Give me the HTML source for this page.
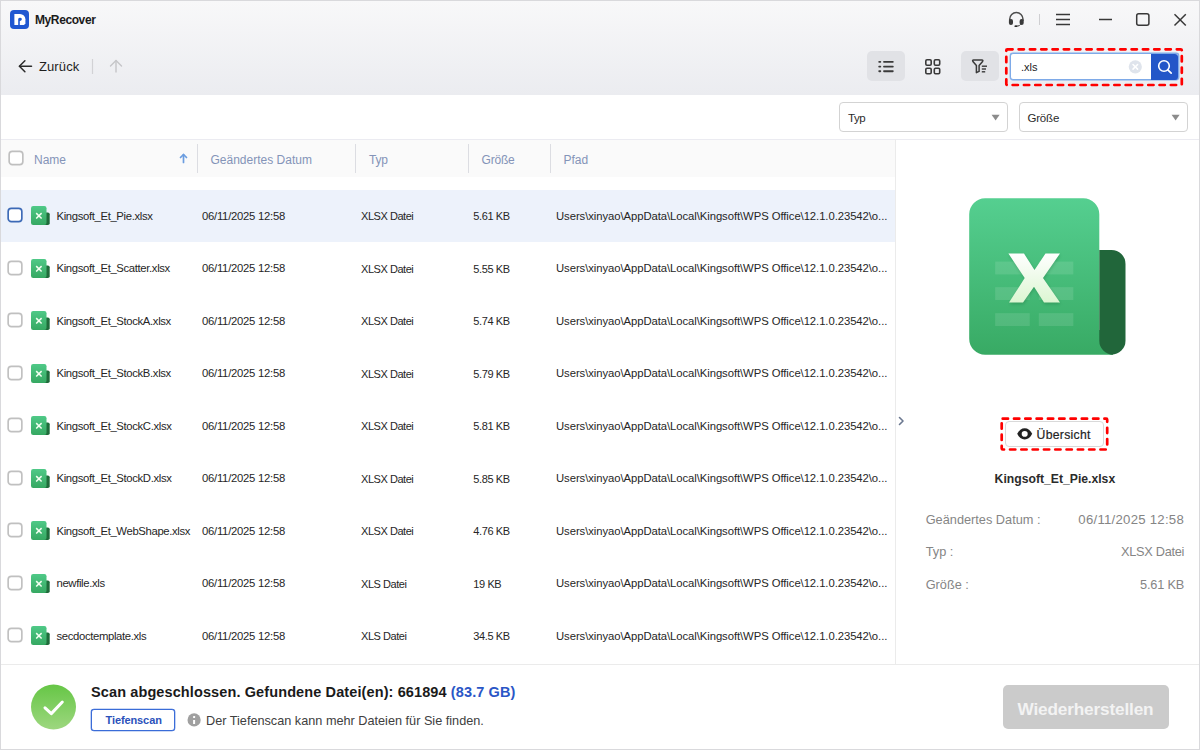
<!DOCTYPE html>
<html><head><meta charset="utf-8">
<style>
*{margin:0;padding:0;box-sizing:border-box}
html,body{width:1200px;height:750px;overflow:hidden;background:#fff}
body{position:relative;font-family:"Liberation Sans",sans-serif;color:#333}
.a{position:absolute}
.t{position:absolute;white-space:nowrap;line-height:1}
#frame{position:absolute;left:0;top:0;width:1200px;height:750px;border:1px solid #d9d9dc;z-index:50}
</style></head><body>
<div class="a" style="left:1px;top:1px;width:1198px;height:94px;background:linear-gradient(#f8f8f9,#ebecf0)"></div>
<svg class="a" style="left:10px;top:10px" width="19" height="19" viewBox="0 0 19 19">
<rect x="0" y="0" width="19" height="19" rx="4" fill="#1f57d1"/>
<path d="M4.4 3.9 H10 A5.4 5.4 0 0 1 15.4 9.3 V13.6 L14 15 H4.4 Z" fill="#fff"/>
<path d="M8.2 15 V9.1 A1.9 1.9 0 0 1 11.9 9.1 A1.9 1.9 0 0 1 9.8 10.9 V15 Z" fill="#1f57d1"/>
</svg>
<div class="t" style="left:35px;top:13.84px;font-size:12px;font-weight:bold;color:#1b1b1b;letter-spacing:-0.4px;">MyRecover</div>
<svg class="a" style="left:1000px;top:5px" width="200" height="30" viewBox="1000 5 200 30">
<g fill="none" stroke="#383838" stroke-width="1.5" stroke-linecap="butt">
<path d="M1009.7 21 V19.2 A6.65 6.65 0 0 1 1023 19.2 V21" stroke-width="1.5" stroke="#4e4e4e"/>
<line x1="1056" y1="14.5" x2="1070" y2="14.5"/>
<line x1="1056" y1="19.5" x2="1070" y2="19.5"/>
<line x1="1056" y1="24.5" x2="1070" y2="24.5"/>
<line x1="1099" y1="19.5" x2="1112" y2="19.5"/>
<rect x="1136.7" y="13.7" width="12.2" height="11.6" rx="2"/>
<line x1="1174.5" y1="14.2" x2="1185.8" y2="25.5"/>
<line x1="1185.8" y1="14.2" x2="1174.5" y2="25.5"/>
</g>
<rect x="1008.9" y="18.9" width="4.1" height="6" rx="2" fill="#3a3a3a"/>
<rect x="1019.6" y="18.9" width="4.1" height="6" rx="2" fill="#3a3a3a"/>
<path d="M1020.6 24.3 Q1019.8 26.2 1016.5 26.2" fill="none" stroke="#3a3a3a" stroke-width="1"/>
<ellipse cx="1015.9" cy="26.15" rx="1.5" ry="0.85" fill="#2a2a2a"/>
<line x1="1039.5" y1="14" x2="1039.5" y2="25" stroke="#cfcfd2" stroke-width="1"/>
</svg>
<svg class="a" style="left:10px;top:50px" width="120" height="30" viewBox="10 50 120 30">
<g fill="none" stroke="#2a2a2a" stroke-width="1.5" stroke-linecap="round" stroke-linejoin="round">
<line x1="19.5" y1="66.3" x2="31.5" y2="66.3"/>
<polyline points="24.9,60.8 19.4,66.3 24.9,71.8"/>
</g>
<line x1="92.5" y1="59" x2="92.5" y2="74" stroke="#d2d2d5" stroke-width="1.2"/>
<g fill="none" stroke="#c5c5c8" stroke-width="1.4" stroke-linecap="round" stroke-linejoin="round">
<line x1="116" y1="60.5" x2="116" y2="72"/>
<polyline points="110.5,66 116,60.5 121.5,66"/>
</g>
</svg>
<div class="t" style="left:39px;top:60.00px;font-size:13px;font-weight:normal;color:#1f1f1f;letter-spacing:0.1px;">Zurück</div>
<div class="a" style="left:867px;top:51px;width:37.5px;height:30px;background:#e1e2e6;border-radius:5px"></div>
<div class="a" style="left:961px;top:51px;width:37.5px;height:30px;background:#e1e2e6;border-radius:5px"></div>
<svg class="a" style="left:860px;top:45px" width="140" height="40" viewBox="860 45 140 40">
<g fill="#3a3a3a">
<rect x="878.3" y="60.95" width="2.9" height="1.9" rx="0.8"/>
<rect x="878.3" y="65.7" width="2.9" height="1.9" rx="0.8"/>
<rect x="878.3" y="70.25" width="2.9" height="1.9" rx="0.8"/>
<rect x="883.1" y="60.95" width="10.6" height="1.9" rx="0.8"/>
<rect x="883.1" y="65.7" width="10.6" height="1.9" rx="0.8"/>
<rect x="883.1" y="70.25" width="10.6" height="1.9" rx="0.8"/>
</g>
<g fill="none" stroke="#3a3a3a" stroke-width="1.6">
<rect x="925.8" y="59.8" width="5.4" height="5.4" rx="1.2"/>
<rect x="934.3" y="59.8" width="5.4" height="5.4" rx="1.2"/>
<rect x="925.8" y="68.3" width="5.4" height="5.4" rx="1.2"/>
<rect x="934.3" y="68.3" width="5.4" height="5.4" rx="1.2"/>
<path d="M973.6 60.1 H981.9 Q983.4 60.1 982.6 61.5 L979.1 65.6 V71.4 L976.4 72.6 V65.6 L972.9 61.5 Q972.1 60.1 973.6 60.1 Z" stroke-linejoin="round" stroke-width="1.5"/>
</g>
<g fill="#3a3a3a">
<rect x="981.8" y="65.5" width="5.2" height="1.4"/>
<rect x="981.8" y="68.3" width="4.2" height="1.4"/>
<rect x="981.8" y="71.1" width="3.4" height="1.4"/>
</g>
</svg>
<div class="a" style="left:1010px;top:53px;width:168.5px;height:27px;background:#fff;border:1px solid #7eaae8;box-shadow:0 0 0 0.4px #7eaae8;border-radius:3px"></div>
<div class="a" style="left:1151px;top:53.5px;width:26.8px;height:26.3px;background:#2356c8;border-radius:0 3px 3px 0"></div>
<svg class="a" style="left:1120px;top:50px" width="70" height="34" viewBox="1120 50 70 34">
<circle cx="1135.3" cy="66.8" r="6.6" fill="#dfe4ec"/>
<g stroke="#fff" stroke-width="1.5" stroke-linecap="round">
<line x1="1133" y1="64.5" x2="1137.6" y2="69.1"/><line x1="1137.6" y1="64.5" x2="1133" y2="69.1"/>
</g>
<circle cx="1164" cy="66" r="5.3" fill="none" stroke="#fff" stroke-width="1.6"/>
<line x1="1167.8" y1="69.8" x2="1171.2" y2="73.2" stroke="#fff" stroke-width="1.7" stroke-linecap="round"/>
</svg>
<div class="t" style="left:1021px;top:61.69px;font-size:11px;font-weight:normal;color:#222;letter-spacing:0px;">.xls</div>
<svg class="a" style="left:1003px;top:45px" width="183" height="44" viewBox="1003 45 183 44">
<rect x="1006.3" y="49.3" width="175.5" height="35.7" rx="1" fill="none" stroke="#ff0000" stroke-width="2.7" stroke-dasharray="5.3 6" stroke-linecap="round"/>
</svg>
<div class="a" style="left:839px;top:102px;width:168.5px;height:29.8px;background:#fff;border:1px solid #d3d3d3;border-radius:4px"></div>
<div class="a" style="left:1019px;top:102px;width:168.5px;height:29.8px;background:#fff;border:1px solid #d3d3d3;border-radius:4px"></div>
<div class="t" style="left:848px;top:112.87px;font-size:11.5px;font-weight:normal;color:#2a2a2a;letter-spacing:-0.4px;">Typ</div>
<div class="t" style="left:1027.5px;top:112.57px;font-size:11.5px;font-weight:normal;color:#2a2a2a;letter-spacing:-0.2px;">Größe</div>
<svg class="a" style="left:980px;top:105px" width="210" height="24" viewBox="980 105 210 24">
<path d="M991.6 114.8 H999.6 L995.6 120.6 Z" fill="#8c8c8c"/>
<path d="M1171.6 114.8 H1179.6 L1175.6 120.6 Z" fill="#8c8c8c"/>
</svg>
<div class="a" style="left:1px;top:139px;width:1198px;height:1px;background:#ebebf1"></div>
<div class="a" style="left:1px;top:140px;width:894px;height:37px;background:#fafafa"></div>
<svg class="a" style="left:5.949999999999999px;top:148.25px" width="20" height="20" viewBox="0 0 20 20"><rect x="3.15" y="3.4" width="13.7" height="13.2" rx="3.2" fill="#fff" stroke="#bfbfbf" stroke-width="1.65"/></svg>
<div class="t" style="left:34px;top:153.84px;font-size:12px;font-weight:normal;color:#8494b8;letter-spacing:0px;">Name</div>
<svg class="a" style="left:175px;top:150px" width="16" height="16" viewBox="175 150 16 16">
<g fill="none" stroke="#6b9de0" stroke-width="1.7" stroke-linecap="round" stroke-linejoin="round">
<line x1="183.5" y1="154.5" x2="183.5" y2="162.5"/><polyline points="180.5,157.5 183.5,154.5 186.5,157.5"/>
</g></svg>
<div class="a" style="left:197.0px;top:144px;width:1px;height:29px;background:#dcdde2"></div>
<div class="a" style="left:355.0px;top:144px;width:1px;height:29px;background:#dcdde2"></div>
<div class="a" style="left:468.0px;top:144px;width:1px;height:29px;background:#dcdde2"></div>
<div class="a" style="left:550.0px;top:144px;width:1px;height:29px;background:#dcdde2"></div>
<div class="t" style="left:210.5px;top:153.84px;font-size:12px;font-weight:normal;color:#8494b8;letter-spacing:0px;">Geändertes Datum</div>
<div class="t" style="left:369px;top:153.84px;font-size:12px;font-weight:normal;color:#8494b8;letter-spacing:-0.2px;">Typ</div>
<div class="t" style="left:481.5px;top:153.84px;font-size:12px;font-weight:normal;color:#8494b8;letter-spacing:-0.2px;">Größe</div>
<div class="t" style="left:563.5px;top:153.84px;font-size:12px;font-weight:normal;color:#8494b8;letter-spacing:0px;">Pfad</div>
<div class="a" style="left:1px;top:189.5px;width:894px;height:52px;background:#edf2fb"></div>
<svg class="a" style="left:4.949999999999999px;top:205.2px" width="20" height="20" viewBox="0 0 20 20"><rect x="3.15" y="3.4" width="13.7" height="13.2" rx="3.2" fill="#fff" stroke="#3c69b6" stroke-width="1.65"/></svg>
<svg class="a" style="left:31px;top:206.0px" width="20" height="20" viewBox="0 0 20 20">
<defs><linearGradient id="gi0" x1="0" y1="0" x2="0" y2="1"><stop offset="0" stop-color="#4fc987"/><stop offset="1" stop-color="#36a862"/></linearGradient></defs>
<rect x="10" y="6.5" width="8.7" height="12.5" rx="1.8" fill="#1f6b3a"/>
<rect x="0" y="0" width="15.5" height="19" rx="2.2" fill="url(#gi0)"/>
<path d="M5.2 7.1 L10.6 12.5 M10.6 7.1 L5.2 12.5" stroke="#f4fff2" stroke-width="1.5"/>
</svg>
<div class="t" style="left:56.5px;top:210.83px;font-size:11.3px;font-weight:normal;color:#262626;letter-spacing:-0.35px;">Kingsoft_Et_Pie.xlsx</div>
<div class="t" style="left:202px;top:210.83px;font-size:11.3px;font-weight:normal;color:#262626;letter-spacing:-0.26px;">06/11/2025 12:58</div>
<div class="t" style="left:361px;top:211.09px;font-size:11px;font-weight:normal;color:#262626;letter-spacing:-0.45px;">XLSX Datei</div>
<div class="t" style="left:473.3px;top:211.09px;font-size:11px;font-weight:normal;color:#262626;letter-spacing:-0.4px;">5.61 KB</div>
<div class="t" style="left:556px;top:210.83px;font-size:11.3px;font-weight:normal;color:#262626;letter-spacing:-0.07px;">Users\xinyao\AppData\Local\Kingsoft\WPS Office\12.1.0.23542\o...</div>
<svg class="a" style="left:4.949999999999999px;top:257.7px" width="20" height="20" viewBox="0 0 20 20"><rect x="3.15" y="3.4" width="13.7" height="13.2" rx="3.2" fill="#fff" stroke="#c0c0c0" stroke-width="1.65"/></svg>
<svg class="a" style="left:31px;top:258.5px" width="20" height="20" viewBox="0 0 20 20">
<defs><linearGradient id="gi1" x1="0" y1="0" x2="0" y2="1"><stop offset="0" stop-color="#4fc987"/><stop offset="1" stop-color="#36a862"/></linearGradient></defs>
<rect x="10" y="6.5" width="8.7" height="12.5" rx="1.8" fill="#1f6b3a"/>
<rect x="0" y="0" width="15.5" height="19" rx="2.2" fill="url(#gi1)"/>
<path d="M5.2 7.1 L10.6 12.5 M10.6 7.1 L5.2 12.5" stroke="#f4fff2" stroke-width="1.5"/>
</svg>
<div class="t" style="left:56.5px;top:263.33px;font-size:11.3px;font-weight:normal;color:#262626;letter-spacing:-0.35px;">Kingsoft_Et_Scatter.xlsx</div>
<div class="t" style="left:202px;top:263.33px;font-size:11.3px;font-weight:normal;color:#262626;letter-spacing:-0.26px;">06/11/2025 12:58</div>
<div class="t" style="left:361px;top:263.59px;font-size:11px;font-weight:normal;color:#262626;letter-spacing:-0.45px;">XLSX Datei</div>
<div class="t" style="left:473.3px;top:263.59px;font-size:11px;font-weight:normal;color:#262626;letter-spacing:-0.4px;">5.55 KB</div>
<div class="t" style="left:556px;top:263.33px;font-size:11.3px;font-weight:normal;color:#262626;letter-spacing:-0.07px;">Users\xinyao\AppData\Local\Kingsoft\WPS Office\12.1.0.23542\o...</div>
<svg class="a" style="left:4.949999999999999px;top:310.2px" width="20" height="20" viewBox="0 0 20 20"><rect x="3.15" y="3.4" width="13.7" height="13.2" rx="3.2" fill="#fff" stroke="#c0c0c0" stroke-width="1.65"/></svg>
<svg class="a" style="left:31px;top:311.0px" width="20" height="20" viewBox="0 0 20 20">
<defs><linearGradient id="gi2" x1="0" y1="0" x2="0" y2="1"><stop offset="0" stop-color="#4fc987"/><stop offset="1" stop-color="#36a862"/></linearGradient></defs>
<rect x="10" y="6.5" width="8.7" height="12.5" rx="1.8" fill="#1f6b3a"/>
<rect x="0" y="0" width="15.5" height="19" rx="2.2" fill="url(#gi2)"/>
<path d="M5.2 7.1 L10.6 12.5 M10.6 7.1 L5.2 12.5" stroke="#f4fff2" stroke-width="1.5"/>
</svg>
<div class="t" style="left:56.5px;top:315.83px;font-size:11.3px;font-weight:normal;color:#262626;letter-spacing:-0.35px;">Kingsoft_Et_StockA.xlsx</div>
<div class="t" style="left:202px;top:315.83px;font-size:11.3px;font-weight:normal;color:#262626;letter-spacing:-0.26px;">06/11/2025 12:58</div>
<div class="t" style="left:361px;top:316.09px;font-size:11px;font-weight:normal;color:#262626;letter-spacing:-0.45px;">XLSX Datei</div>
<div class="t" style="left:473.3px;top:316.09px;font-size:11px;font-weight:normal;color:#262626;letter-spacing:-0.4px;">5.74 KB</div>
<div class="t" style="left:556px;top:315.83px;font-size:11.3px;font-weight:normal;color:#262626;letter-spacing:-0.07px;">Users\xinyao\AppData\Local\Kingsoft\WPS Office\12.1.0.23542\o...</div>
<svg class="a" style="left:4.949999999999999px;top:362.7px" width="20" height="20" viewBox="0 0 20 20"><rect x="3.15" y="3.4" width="13.7" height="13.2" rx="3.2" fill="#fff" stroke="#c0c0c0" stroke-width="1.65"/></svg>
<svg class="a" style="left:31px;top:363.5px" width="20" height="20" viewBox="0 0 20 20">
<defs><linearGradient id="gi3" x1="0" y1="0" x2="0" y2="1"><stop offset="0" stop-color="#4fc987"/><stop offset="1" stop-color="#36a862"/></linearGradient></defs>
<rect x="10" y="6.5" width="8.7" height="12.5" rx="1.8" fill="#1f6b3a"/>
<rect x="0" y="0" width="15.5" height="19" rx="2.2" fill="url(#gi3)"/>
<path d="M5.2 7.1 L10.6 12.5 M10.6 7.1 L5.2 12.5" stroke="#f4fff2" stroke-width="1.5"/>
</svg>
<div class="t" style="left:56.5px;top:368.33px;font-size:11.3px;font-weight:normal;color:#262626;letter-spacing:-0.35px;">Kingsoft_Et_StockB.xlsx</div>
<div class="t" style="left:202px;top:368.33px;font-size:11.3px;font-weight:normal;color:#262626;letter-spacing:-0.26px;">06/11/2025 12:58</div>
<div class="t" style="left:361px;top:368.59px;font-size:11px;font-weight:normal;color:#262626;letter-spacing:-0.45px;">XLSX Datei</div>
<div class="t" style="left:473.3px;top:368.59px;font-size:11px;font-weight:normal;color:#262626;letter-spacing:-0.4px;">5.79 KB</div>
<div class="t" style="left:556px;top:368.33px;font-size:11.3px;font-weight:normal;color:#262626;letter-spacing:-0.07px;">Users\xinyao\AppData\Local\Kingsoft\WPS Office\12.1.0.23542\o...</div>
<svg class="a" style="left:4.949999999999999px;top:415.2px" width="20" height="20" viewBox="0 0 20 20"><rect x="3.15" y="3.4" width="13.7" height="13.2" rx="3.2" fill="#fff" stroke="#c0c0c0" stroke-width="1.65"/></svg>
<svg class="a" style="left:31px;top:416.0px" width="20" height="20" viewBox="0 0 20 20">
<defs><linearGradient id="gi4" x1="0" y1="0" x2="0" y2="1"><stop offset="0" stop-color="#4fc987"/><stop offset="1" stop-color="#36a862"/></linearGradient></defs>
<rect x="10" y="6.5" width="8.7" height="12.5" rx="1.8" fill="#1f6b3a"/>
<rect x="0" y="0" width="15.5" height="19" rx="2.2" fill="url(#gi4)"/>
<path d="M5.2 7.1 L10.6 12.5 M10.6 7.1 L5.2 12.5" stroke="#f4fff2" stroke-width="1.5"/>
</svg>
<div class="t" style="left:56.5px;top:420.83px;font-size:11.3px;font-weight:normal;color:#262626;letter-spacing:-0.35px;">Kingsoft_Et_StockC.xlsx</div>
<div class="t" style="left:202px;top:420.83px;font-size:11.3px;font-weight:normal;color:#262626;letter-spacing:-0.26px;">06/11/2025 12:58</div>
<div class="t" style="left:361px;top:421.09px;font-size:11px;font-weight:normal;color:#262626;letter-spacing:-0.45px;">XLSX Datei</div>
<div class="t" style="left:473.3px;top:421.09px;font-size:11px;font-weight:normal;color:#262626;letter-spacing:-0.4px;">5.81 KB</div>
<div class="t" style="left:556px;top:420.83px;font-size:11.3px;font-weight:normal;color:#262626;letter-spacing:-0.07px;">Users\xinyao\AppData\Local\Kingsoft\WPS Office\12.1.0.23542\o...</div>
<svg class="a" style="left:4.949999999999999px;top:467.7px" width="20" height="20" viewBox="0 0 20 20"><rect x="3.15" y="3.4" width="13.7" height="13.2" rx="3.2" fill="#fff" stroke="#c0c0c0" stroke-width="1.65"/></svg>
<svg class="a" style="left:31px;top:468.5px" width="20" height="20" viewBox="0 0 20 20">
<defs><linearGradient id="gi5" x1="0" y1="0" x2="0" y2="1"><stop offset="0" stop-color="#4fc987"/><stop offset="1" stop-color="#36a862"/></linearGradient></defs>
<rect x="10" y="6.5" width="8.7" height="12.5" rx="1.8" fill="#1f6b3a"/>
<rect x="0" y="0" width="15.5" height="19" rx="2.2" fill="url(#gi5)"/>
<path d="M5.2 7.1 L10.6 12.5 M10.6 7.1 L5.2 12.5" stroke="#f4fff2" stroke-width="1.5"/>
</svg>
<div class="t" style="left:56.5px;top:473.33px;font-size:11.3px;font-weight:normal;color:#262626;letter-spacing:-0.35px;">Kingsoft_Et_StockD.xlsx</div>
<div class="t" style="left:202px;top:473.33px;font-size:11.3px;font-weight:normal;color:#262626;letter-spacing:-0.26px;">06/11/2025 12:58</div>
<div class="t" style="left:361px;top:473.59px;font-size:11px;font-weight:normal;color:#262626;letter-spacing:-0.45px;">XLSX Datei</div>
<div class="t" style="left:473.3px;top:473.59px;font-size:11px;font-weight:normal;color:#262626;letter-spacing:-0.4px;">5.85 KB</div>
<div class="t" style="left:556px;top:473.33px;font-size:11.3px;font-weight:normal;color:#262626;letter-spacing:-0.07px;">Users\xinyao\AppData\Local\Kingsoft\WPS Office\12.1.0.23542\o...</div>
<svg class="a" style="left:4.949999999999999px;top:520.2px" width="20" height="20" viewBox="0 0 20 20"><rect x="3.15" y="3.4" width="13.7" height="13.2" rx="3.2" fill="#fff" stroke="#c0c0c0" stroke-width="1.65"/></svg>
<svg class="a" style="left:31px;top:521.0px" width="20" height="20" viewBox="0 0 20 20">
<defs><linearGradient id="gi6" x1="0" y1="0" x2="0" y2="1"><stop offset="0" stop-color="#4fc987"/><stop offset="1" stop-color="#36a862"/></linearGradient></defs>
<rect x="10" y="6.5" width="8.7" height="12.5" rx="1.8" fill="#1f6b3a"/>
<rect x="0" y="0" width="15.5" height="19" rx="2.2" fill="url(#gi6)"/>
<path d="M5.2 7.1 L10.6 12.5 M10.6 7.1 L5.2 12.5" stroke="#f4fff2" stroke-width="1.5"/>
</svg>
<div class="t" style="left:56.5px;top:525.83px;font-size:11.3px;font-weight:normal;color:#262626;letter-spacing:-0.35px;">Kingsoft_Et_WebShape.xlsx</div>
<div class="t" style="left:202px;top:525.83px;font-size:11.3px;font-weight:normal;color:#262626;letter-spacing:-0.26px;">06/11/2025 12:58</div>
<div class="t" style="left:361px;top:526.09px;font-size:11px;font-weight:normal;color:#262626;letter-spacing:-0.45px;">XLSX Datei</div>
<div class="t" style="left:473.3px;top:526.09px;font-size:11px;font-weight:normal;color:#262626;letter-spacing:-0.4px;">4.76 KB</div>
<div class="t" style="left:556px;top:525.83px;font-size:11.3px;font-weight:normal;color:#262626;letter-spacing:-0.07px;">Users\xinyao\AppData\Local\Kingsoft\WPS Office\12.1.0.23542\o...</div>
<svg class="a" style="left:4.949999999999999px;top:572.7px" width="20" height="20" viewBox="0 0 20 20"><rect x="3.15" y="3.4" width="13.7" height="13.2" rx="3.2" fill="#fff" stroke="#c0c0c0" stroke-width="1.65"/></svg>
<svg class="a" style="left:31px;top:573.5px" width="20" height="20" viewBox="0 0 20 20">
<defs><linearGradient id="gi7" x1="0" y1="0" x2="0" y2="1"><stop offset="0" stop-color="#4fc987"/><stop offset="1" stop-color="#36a862"/></linearGradient></defs>
<rect x="10" y="6.5" width="8.7" height="12.5" rx="1.8" fill="#1f6b3a"/>
<rect x="0" y="0" width="15.5" height="19" rx="2.2" fill="url(#gi7)"/>
<path d="M5.2 7.1 L10.6 12.5 M10.6 7.1 L5.2 12.5" stroke="#f4fff2" stroke-width="1.5"/>
</svg>
<div class="t" style="left:56.5px;top:578.33px;font-size:11.3px;font-weight:normal;color:#262626;letter-spacing:-0.35px;">newfile.xls</div>
<div class="t" style="left:202px;top:578.33px;font-size:11.3px;font-weight:normal;color:#262626;letter-spacing:-0.26px;">06/11/2025 12:58</div>
<div class="t" style="left:361px;top:578.59px;font-size:11px;font-weight:normal;color:#262626;letter-spacing:-0.45px;">XLS Datei</div>
<div class="t" style="left:473.3px;top:578.59px;font-size:11px;font-weight:normal;color:#262626;letter-spacing:-0.4px;">19 KB</div>
<div class="t" style="left:556px;top:578.33px;font-size:11.3px;font-weight:normal;color:#262626;letter-spacing:-0.07px;">Users\xinyao\AppData\Local\Kingsoft\WPS Office\12.1.0.23542\o...</div>
<svg class="a" style="left:4.949999999999999px;top:625.2px" width="20" height="20" viewBox="0 0 20 20"><rect x="3.15" y="3.4" width="13.7" height="13.2" rx="3.2" fill="#fff" stroke="#c0c0c0" stroke-width="1.65"/></svg>
<svg class="a" style="left:31px;top:626.0px" width="20" height="20" viewBox="0 0 20 20">
<defs><linearGradient id="gi8" x1="0" y1="0" x2="0" y2="1"><stop offset="0" stop-color="#4fc987"/><stop offset="1" stop-color="#36a862"/></linearGradient></defs>
<rect x="10" y="6.5" width="8.7" height="12.5" rx="1.8" fill="#1f6b3a"/>
<rect x="0" y="0" width="15.5" height="19" rx="2.2" fill="url(#gi8)"/>
<path d="M5.2 7.1 L10.6 12.5 M10.6 7.1 L5.2 12.5" stroke="#f4fff2" stroke-width="1.5"/>
</svg>
<div class="t" style="left:56.5px;top:630.83px;font-size:11.3px;font-weight:normal;color:#262626;letter-spacing:-0.35px;">secdoctemplate.xls</div>
<div class="t" style="left:202px;top:630.83px;font-size:11.3px;font-weight:normal;color:#262626;letter-spacing:-0.26px;">06/11/2025 12:58</div>
<div class="t" style="left:361px;top:631.09px;font-size:11px;font-weight:normal;color:#262626;letter-spacing:-0.45px;">XLS Datei</div>
<div class="t" style="left:473.3px;top:631.09px;font-size:11px;font-weight:normal;color:#262626;letter-spacing:-0.4px;">34.5 KB</div>
<div class="t" style="left:556px;top:630.83px;font-size:11.3px;font-weight:normal;color:#262626;letter-spacing:-0.07px;">Users\xinyao\AppData\Local\Kingsoft\WPS Office\12.1.0.23542\o...</div>
<div class="a" style="left:895px;top:139px;width:1px;height:525px;background:#ebebeb"></div>
<svg class="a" style="left:960px;top:190px" width="175" height="175" viewBox="960 190 175 175">
<defs>
<linearGradient id="gd" x1="0" y1="0" x2="0" y2="1"><stop offset="0" stop-color="#55cf90"/><stop offset="1" stop-color="#38aa64"/></linearGradient>
<linearGradient id="gx" x1="0" y1="0" x2="0" y2="1"><stop offset="0" stop-color="#ffffff"/><stop offset="1" stop-color="#dcf6d2"/></linearGradient>
</defs>
<path d="M985.2 198.2 H1083.3 A16 16 0 0 1 1099.3 214.2 V330 H1113 V354.7 H985.2 A16 16 0 0 1 969.2 338.7 V214.2 A16 16 0 0 1 985.2 198.2 Z" fill="url(#gd)"/>
<path d="M1099.3 250 H1111.5 A14 14 0 0 1 1125.5 264 V340.7 A14 14 0 0 1 1111.5 354.7 H1113 A14 14 0 0 1 1099.3 340.7 Z" fill="#21663a"/>
<g fill="#ffffff" opacity="0.11">
<rect x="995.2" y="261.6" width="34.5" height="12.8"/><rect x="1038.8" y="261.6" width="34.5" height="12.8"/>
<rect x="995.2" y="287.2" width="34.5" height="12.8"/><rect x="1038.8" y="287.2" width="34.5" height="12.8"/>
<rect x="995.2" y="313.2" width="34.5" height="12.8"/><rect x="1038.8" y="313.2" width="34.5" height="12.8"/>
</g>
<filter id="xs" x="-20%" y="-20%" width="140%" height="140%"><feGaussianBlur stdDeviation="1.6"/></filter>
<path d="M1008.4 253.5 H1024 L1034.5 270 L1045.5 253.5 H1060 L1043 278 L1060 302.6 H1044 L1034 286.7 L1023 302.6 H1009 L1024.7 278 Z" fill="#0a4a22" opacity="0.22" transform="translate(0.6,1.6)" filter="url(#xs)"/>
<path d="M1008.4 253.5 H1024 L1034.5 270 L1045.5 253.5 H1060 L1043 278 L1060 302.6 H1044 L1034 286.7 L1023 302.6 H1009 L1024.7 278 Z" fill="url(#gx)"/>
</svg>
<svg class="a" style="left:895px;top:412px" width="12" height="18" viewBox="895 412 12 18">
<polyline points="899.5,417.5 903,421 899.5,424.5" fill="none" stroke="#6b7890" stroke-width="1.6" stroke-linecap="round" stroke-linejoin="round"/>
</svg>
<div class="a" style="left:1005px;top:421.4px;width:98.6px;height:25.2px;background:#fff;border:1px solid #d9d9d9;border-radius:4px"></div>
<svg class="a" style="left:1012px;top:425px" width="24" height="20" viewBox="1012 425 24 20">
<path d="M1017.2 433.8 C1019 430.2 1021.5 428.2 1024.7 428.2 C1027.9 428.2 1030.4 430.2 1032.2 433.8 C1030.4 437.4 1027.9 439.5 1024.7 439.5 C1021.5 439.5 1019 437.4 1017.2 433.8 Z" fill="#222"/>
<ellipse cx="1024.7" cy="433.9" rx="3" ry="2.8" fill="#fff"/>
</svg>
<div class="t" style="left:1036.6px;top:429.07px;font-size:12.2px;font-weight:normal;color:#1f1f1f;letter-spacing:0.3px;-webkit-text-stroke:0.2px #1f1f1f;">Übersicht</div>
<svg class="a" style="left:996px;top:413px" width="118" height="42" viewBox="996 413 118 42">
<rect x="1001.7" y="418.7" width="105.5" height="30.8" rx="1" fill="none" stroke="#ff0000" stroke-width="2.7" stroke-dasharray="5.3 6" stroke-linecap="round"/>
</svg>
<div class="t" style="left:994.6px;top:473.07px;font-size:12.2px;font-weight:bold;color:#2b2b2b;letter-spacing:0px;">Kingsoft_Et_Pie.xlsx</div>
<div class="t" style="left:925.7px;top:513.81px;font-size:12.75px;font-weight:normal;color:#858585;letter-spacing:0px;">Geändertes Datum :</div>
<div class="t" style="left:925.7px;top:546.41px;font-size:12.75px;font-weight:normal;color:#858585;letter-spacing:0px;">Typ :</div>
<div class="t" style="left:925.7px;top:579.01px;font-size:12.75px;font-weight:normal;color:#858585;letter-spacing:0px;">Größe :</div>
<div class="t" style="right:16px;top:513.43px;font-size:13.2px;font-weight:normal;color:#858585;letter-spacing:0.25px;">06/11/2025 12:58</div>
<div class="t" style="right:16px;top:546.41px;font-size:12.75px;font-weight:normal;color:#858585;letter-spacing:-0.3px;">XLSX Datei</div>
<div class="t" style="right:16px;top:579.01px;font-size:12.75px;font-weight:normal;color:#858585;letter-spacing:-0.2px;">5.61 KB</div>
<div class="a" style="left:1px;top:664px;width:1198px;height:1px;background:#ebebeb"></div>
<svg class="a" style="left:28px;top:682px" width="52" height="52" viewBox="28 682 52 52">
<defs><linearGradient id="gc" x1="0" y1="0" x2="0" y2="1"><stop offset="0" stop-color="#66c646"/><stop offset="1" stop-color="#9dd77f"/></linearGradient></defs>
<circle cx="53.5" cy="707" r="22.5" fill="url(#gc)"/>
<polyline points="45,707.8 51.3,713.6 62.3,702" fill="none" stroke="#fff" stroke-width="3" stroke-linecap="round" stroke-linejoin="round"/>
</svg>
<div class="t" style="left:91px;top:685.33px;font-size:14.5px;font-weight:bold;color:#1a1a1a;letter-spacing:0.11px;">Scan abgeschlossen. Gefundene Datei(en): 661894 <span style="color:#2a56c6">(83.7 GB)</span></div>
<div class="a" style="left:91px;top:709px;width:83.8px;height:22.2px;background:#fff;border:1px solid #3a6cd8;box-shadow:0 0 0 0.3px #3a6cd8;border-radius:3px"></div>
<div class="t" style="left:105.5px;top:715.49px;font-size:11px;font-weight:bold;color:#2b52bb;letter-spacing:-0.1px;">Tiefenscan</div>
<svg class="a" style="left:186px;top:713px" width="15" height="15" viewBox="186 713 15 15">
<circle cx="194.1" cy="719.9" r="6.6" fill="#a0a0a0"/>
<rect x="193.1" y="720" width="2" height="4" fill="#fff"/>
<rect x="193.1" y="716.1" width="2" height="1.9" rx="0.5" fill="#fff"/>
</svg>
<div class="t" style="left:206px;top:715.25px;font-size:12.7px;font-weight:normal;color:#404040;letter-spacing:0px;">Der Tiefenscan kann mehr Dateien für Sie finden.</div>
<div class="a" style="left:1002.5px;top:684.5px;width:166.3px;height:44.3px;background:#cbcbcb;border-radius:5px"></div>
<div class="t" style="left:1017.5px;top:700.64px;font-size:17.2px;font-weight:bold;color:#f3f3f3;letter-spacing:-0.15px;">Wiederherstellen</div>
<div id="frame"></div>
</body></html>
